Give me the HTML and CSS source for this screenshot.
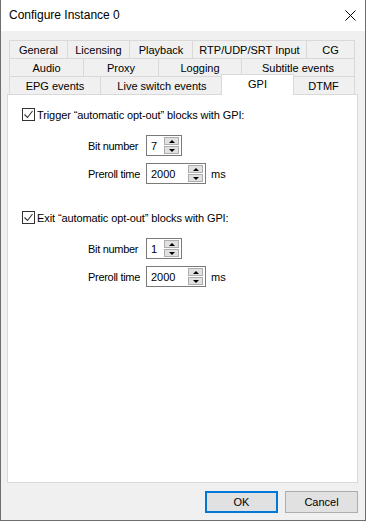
FILE: index.html
```html
<!DOCTYPE html>
<html lang="en">
<head>
    <meta charset="UTF-8">
    <meta name="viewport" content="width=device-width, initial-scale=1.0">
    <title>Configure Instance 0</title>
    <link rel="stylesheet" href="styles.css">
</head>
<body>
    <div class="window">
        <div class="titlebar">
            <span class="title">Configure Instance 0</span>
            <svg class="close" width="11" height="11" viewBox="0 0 11 11">
                <path d="M0.5 0.5 L10.5 10.5 M10.5 0.5 L0.5 10.5" stroke="#000" stroke-width="1" fill="none"/>
            </svg>
        </div>

        <div class="client">
            <div class="tabs">
                <div class="tab-row">
                    <div class="tab tab-general">General</div>
                    <div class="tab tab-licensing">Licensing</div>
                    <div class="tab tab-playback">Playback</div>
                    <div class="tab tab-rtp">RTP/UDP/SRT Input</div>
                    <div class="tab tab-cg">CG</div>
                </div>
                <div class="tab-row">
                    <div class="tab tab-audio">Audio</div>
                    <div class="tab tab-proxy">Proxy</div>
                    <div class="tab tab-logging">Logging</div>
                    <div class="tab tab-subtitle">Subtitle events</div>
                </div>
                <div class="tab-row">
                    <div class="tab tab-epg">EPG events</div>
                    <div class="tab tab-live">Live switch events</div>
                    <div class="tab tab-gpi active">GPI</div>
                    <div class="tab tab-dtmf">DTMF</div>
                </div>
            </div>

            <div class="panel">
                <div class="group">
                    <label class="check">
                        <span class="box">
                            <svg width="11" height="11" viewBox="0 0 11 11"><path d="M1.5 5.5 L4.5 8.5 L9.5 2" stroke="#333" stroke-width="1.1" fill="none"/></svg>
                        </span>
                        Trigger “automatic opt-out” blocks with GPI:
                    </label>
                    <div class="field">
                        <span class="field-label">Bit number</span>
                        <div class="spin spin-small">
                            <span class="spin-value">7</span>
                            <span class="spin-buttons"><span class="spin-btn"><i class="arrow-up"></i></span><span class="spin-btn"><i class="arrow-down"></i></span></span>
                        </div>
                    </div>
                    <div class="field">
                        <span class="field-label">Preroll time</span>
                        <div class="spin spin-wide">
                            <span class="spin-value">2000</span>
                            <span class="spin-buttons"><span class="spin-btn"><i class="arrow-up"></i></span><span class="spin-btn"><i class="arrow-down"></i></span></span>
                        </div>
                        <span class="unit">ms</span>
                    </div>
                </div>

                <div class="group group-second">
                    <label class="check">
                        <span class="box">
                            <svg width="11" height="11" viewBox="0 0 11 11"><path d="M1.5 5.5 L4.5 8.5 L9.5 2" stroke="#333" stroke-width="1.1" fill="none"/></svg>
                        </span>
                        Exit “automatic opt-out” blocks with GPI:
                    </label>
                    <div class="field">
                        <span class="field-label">Bit number</span>
                        <div class="spin spin-small">
                            <span class="spin-value">1</span>
                            <span class="spin-buttons"><span class="spin-btn"><i class="arrow-up"></i></span><span class="spin-btn"><i class="arrow-down"></i></span></span>
                        </div>
                    </div>
                    <div class="field">
                        <span class="field-label">Preroll time</span>
                        <div class="spin spin-wide">
                            <span class="spin-value">2000</span>
                            <span class="spin-buttons"><span class="spin-btn"><i class="arrow-up"></i></span><span class="spin-btn"><i class="arrow-down"></i></span></span>
                        </div>
                        <span class="unit">ms</span>
                    </div>
                </div>
            </div>

            <div class="buttons">
                <button class="btn btn-default">OK</button>
                <button class="btn">Cancel</button>
            </div>
        </div>
    </div>
</body>
</html>
```

FILE: styles.css
```css
body {
    margin: 0;
    padding: 0;
    font-family: "Liberation Sans", Arial, sans-serif;
    font-size: 11px;
    color: #000;
    background: #fff;
}
.window {
    width: 366px;
    height: 521px;
    box-sizing: border-box;
    border: 1px solid #6e6e6e;
    border-top: none;
    display: flex;
    flex-direction: column;
}
.titlebar {
    height: 31px;
    background: #fff;
    display: flex;
    align-items: center;
    padding: 0 9px 0 8px;
    flex-shrink: 0;
}
.title {
    font-size: 12px;
    flex: 1;
    padding-bottom: 1px;
}
.client {
    flex: 1;
    background: #f0f0f0;
    padding: 9px 7px 0 6px;
}

/* tabs */
.tabs {
    padding: 0 3px 0 2px;
}
.tab-row {
    display: flex;
    height: 18px;
}
.tab {
    box-sizing: border-box;
    height: 18px;
    border-top: 1px solid #d9d9d9;
    border-left: 1px solid #d9d9d9;
    text-align: center;
    line-height: 18px;
    white-space: nowrap;
    background: #f0f0f0;
}
.tab:last-child {
    border-right: 1px solid #d9d9d9;
}
.tab.active {
    background: #fff;
    height: 21px;
    margin: -2px -2px -1px -2px;
    border-right: 1px solid #d9d9d9;
    position: relative;
    z-index: 2;
    line-height: 18px;
}
.tab-general { width: 58px; }
.tab-licensing { width: 62px; }
.tab-playback { width: 63px; }
.tab-rtp { width: 114px; }
.tab-cg { width: 49px; }
.tab-audio { width: 74px; }
.tab-proxy { width: 75px; }
.tab-logging { width: 83px; }
.tab-subtitle { width: 114px; }
.tab-epg { width: 91px; }
.tab-live { width: 123px; }
.tab-gpi { width: 73px; }
.tab-dtmf { width: 63px; }

/* panel */
.panel {
    height: 389px;
    box-sizing: border-box;
    border: 1px solid #d9d9d9;
    background: #fff;
    padding: 12px 0 0 14px;
}
.check {
    display: flex;
    align-items: flex-end;
    height: 14px;
    line-height: 12px;
    letter-spacing: -0.1px;
}
.box {
    width: 13px;
    height: 13px;
    box-sizing: border-box;
    border: 1px solid #333;
    background: #fff;
    margin-right: 2px;
    display: flex;
    align-items: center;
    justify-content: center;
}
.field {
    display: flex;
    align-items: center;
    margin-left: 66px;
    margin-top: 14px;
}
.field + .field {
    margin-top: 7px;
}
.field-label {
    width: 58px;
    letter-spacing: -0.3px;
}
.spin {
    height: 21px;
    box-sizing: border-box;
    border: 1px solid #7a7a7a;
    display: flex;
    align-items: center;
    padding: 0 2px 0 4px;
    background: #fff;
}
.spin-small { width: 36px; }
.spin-wide { width: 60px; }
.spin-value {
    flex: 1;
}
.spin-buttons {
    display: flex;
    flex-direction: column;
    width: 15px;
    gap: 1px;
}
.spin-btn {
    height: 8px;
    box-sizing: border-box;
    border: 1px solid #adadad;
    background: #e1e1e1;
    display: flex;
    align-items: center;
    justify-content: center;
}
.arrow-up, .arrow-down {
    width: 0;
    height: 0;
    border-left: 3px solid transparent;
    border-right: 3px solid transparent;
}
.arrow-up { border-bottom: 3px solid #000; }
.arrow-down { border-top: 3px solid #000; }
.unit {
    margin-left: 5px;
}
.group-second {
    margin-top: 26px;
}

/* buttons */
.buttons {
    display: flex;
    justify-content: flex-end;
    gap: 7px;
    margin-top: 8px;
}
.btn {
    width: 73px;
    height: 22px;
    box-sizing: border-box;
    border: 1px solid #adadad;
    background: #e1e1e1;
    font-family: "Liberation Sans", Arial, sans-serif;
    font-size: 11px;
    color: #000;
    padding: 0;
}
.btn-default {
    border: 2px solid #0078d7;
}
```
